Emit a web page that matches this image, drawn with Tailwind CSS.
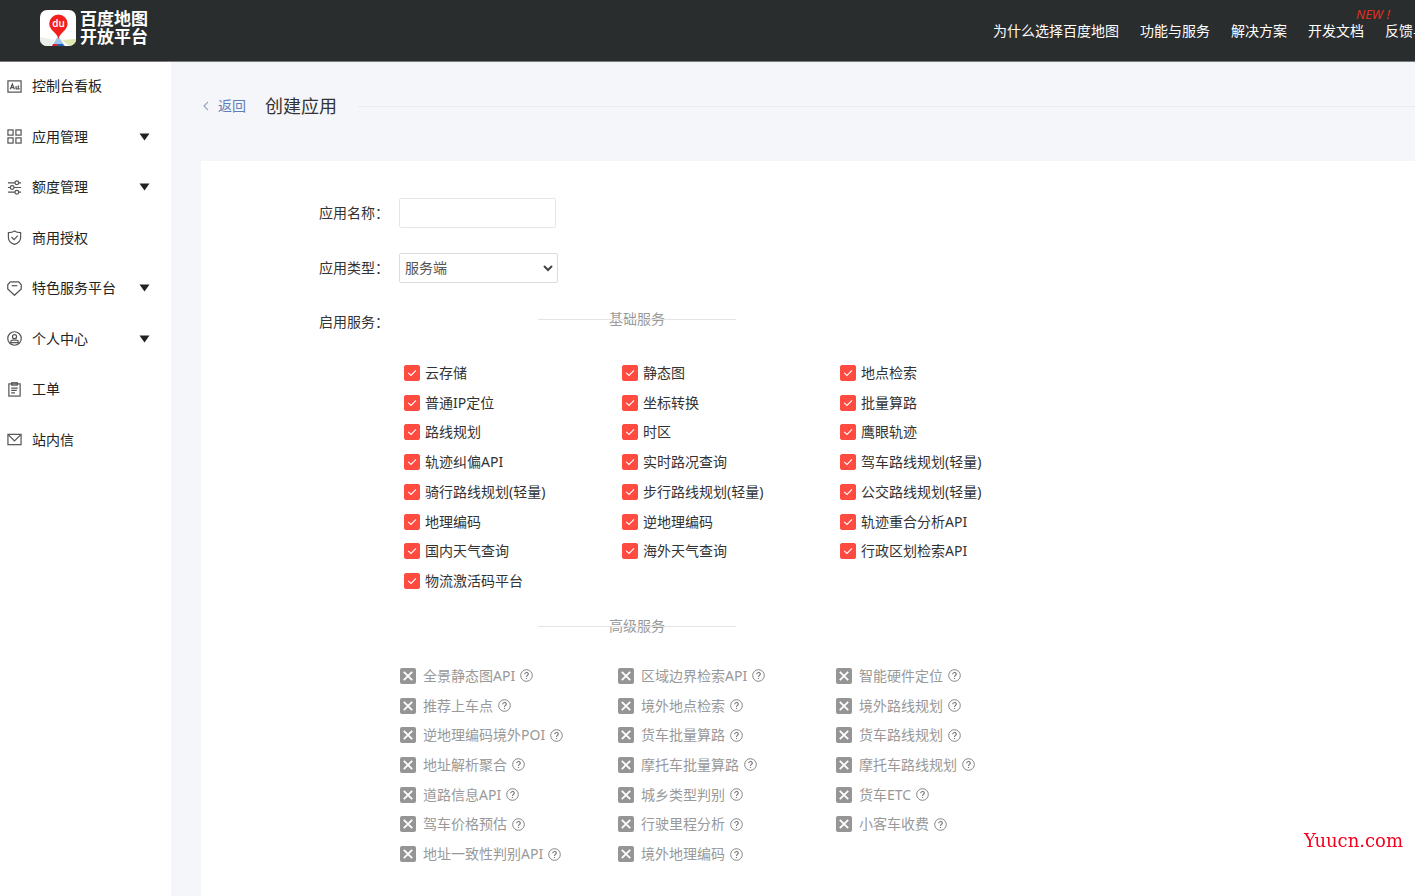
<!DOCTYPE html>
<html lang="zh-CN">
<head>
    <meta charset="UTF-8">
    <meta name="viewport" content="width=device-width, initial-scale=1.0">
    <title>百度地图开放平台</title>
    <script src="https://cdn.jsdelivr.net/npm/@tailwindcss/browser@4"></script>
</head>
<body class="flex flex-col h-screen overflow-hidden bg-[#f5f6fa] text-sm text-[#333] font-['Noto_Sans','Noto_Sans_CJK_SC',sans-serif]">

    <!-- Header -->
    <header class="flex shrink-0 items-center h-[62px] pl-10 bg-[#2a2d2e] border-b border-[#77797c] text-white">
        <a href="#" class="flex shrink-0 items-center gap-1 mb-1.5">
            <svg class="size-9" viewBox="0 0 36 36">
                <defs>
                    <clipPath id="logoClip"><rect width="36" height="36" rx="7" /></clipPath>
                </defs>
                <g clip-path="url(#logoClip)">
                    <rect width="36" height="36" fill="#fff" />
                    <path d="M0 27L14 30L11 36H0z" fill="#e9eee9" />
                    <path d="M22 30L36 29V33L29 36z" fill="#dfe8b0" />
                    <path d="M18 26L12 36H25z" fill="#9cc3ea" />
                    <path d="M13 34h5v2h-6z" fill="#d8262c" />
                    <path d="M18 34h5l1 2h-6z" fill="#2560b8" />
                    <path d="M18.500 29C17.500 23 9.200 20.500 9.200 13.800a9.200 9.200 0 0 1 18.400 0C27.600 20.500 19.500 23 18.500 29z" fill="#f0211f" />
                    <text x="18.500" y="17" text-anchor="middle" font-size="10" font-weight="600" font-family="Open Sans, sans-serif" fill="#fff">du</text>
                </g>
            </svg>
            <span class="text-[17px] leading-[18px] font-bold">百度地图<br>开放平台</span>
        </a>
        <nav class="flex gap-[21px] ml-auto whitespace-nowrap">
            <a href="#">为什么选择百度地图</a>
            <a href="#">功能与服务</a>
            <a href="#">解决方案</a>
            <a href="#" class="relative">开发文档
                <span class="absolute left-12 -top-[15px] text-[13px] leading-4 italic text-[#e0301e]">NEW !</span>
            </a>
            <a href="#" class="w-[30px] overflow-hidden">反馈与建议</a>
        </nav>
    </header>

    <div class="flex flex-1 min-h-0">
        <!-- Sidebar -->
        <aside class="w-[171px] shrink-0 bg-white">
            <ul id="menu" class="grid auto-rows-fr h-[404px] -mt-px"></ul>
        </aside>

        <main class="flex flex-col flex-1 min-w-0 pl-[30px]">
            <div class="flex items-center shrink-0 h-[99px] pb-[11px]">
                <a href="#" class="flex items-center gap-2 ml-px text-[#5f7fb9]">
                    <svg class="w-2 h-3" viewBox="0 0 8 12" fill="none" stroke="#9aa8c4" stroke-width="1.2"><path d="M6 2L2 6l4 4" /></svg>
                    返回
                </a>
                <h1 class="ml-[19px] text-lg">创建应用</h1>
                <div class="flex-1 ml-[21px] border-t border-[#e9ebf0]"></div>
            </div>

            <form class="flex-1 bg-white pl-[118px] pt-[37px]">
                <div class="flex items-center h-[30px] mb-[25px]">
                    <label for="appName" class="w-20">应用名称：</label>
                    <input id="appName" type="text" class="w-[157px] h-[30px] px-1.5 border border-[#e6e6e6] rounded-xs outline-none">
                </div>
                <div class="flex items-center h-[30px] mb-[25px]">
                    <label for="appType" class="w-20">应用类型：</label>
                    <div class="relative">
                        <select id="appType" class="block w-[159px] h-[30px] px-[5px] border border-[#dcdcdc] rounded-xs appearance-none bg-white text-[#555]">
                            <option>服务端</option>
                        </select>
                        <svg class="absolute right-1 top-2.5 w-3 h-2.5 pointer-events-none" viewBox="0 0 12 10" fill="none" stroke="#444" stroke-width="2"><path d="M2 3l4 4 4-4" /></svg>
                    </div>
                </div>
                <div class="flex">
                    <span class="w-20 shrink-0 pt-1">启用服务：</span>
                    <div class="pt-px">
                        <h2 class="relative w-[198px] ml-[139px] leading-5 text-center text-[#999]">
                            <span class="absolute inset-x-0 top-2.5 border-t border-[#e4e4e4]"></span>基础服务
                        </h2>
                        <div id="basic" class="grid grid-cols-[218px_218px_218px] auto-rows-fr h-[238px] pl-[5px] mt-[29px]"></div>
                        <h2 class="relative w-[198px] ml-[139px] mt-5 leading-5 text-center text-[#999]">
                            <span class="absolute inset-x-0 top-2.5 border-t border-[#e4e4e4]"></span>高级服务
                        </h2>
                        <div id="advanced" class="grid grid-cols-[218px_218px_218px] auto-rows-fr h-[208px] pl-px mt-[25px] text-[#999]"></div>
                    </div>
                </div>
            </form>
        </main>
    </div>

    <span class="fixed right-3 bottom-[43px] text-[18px] leading-6 text-[#f5001d] font-['DejaVu_Serif',serif]">Yuucn.com</span>

    <script>
        const menu = [
            ["控制台看板", false, '<rect x="1" y="2" width="14" height="12"/><path d="M3.500 11L5.700 5.500L7.900 11M4.200 9.300h3M9.700 7.500v3h1.500M13 7.500h-1v3h1.500"/>'],
            ["应用管理", true, '<rect x="1" y="1" width="5.500" height="5.500"/><rect x="9.500" y="1" width="5.500" height="5.500"/><rect x="1" y="9.500" width="5.500" height="5.500"/><rect x="9.500" y="9.500" width="5.500" height="5.500"/>'],
            ["额度管理", true, '<path d="M1 3h7.500M12.500 3H15M1 8h2.500M7.500 8H15M1 13h7.500M12.500 13H15"/><circle cx="10.500" cy="3" r="2"/><circle cx="5.500" cy="8" r="2"/><circle cx="10.500" cy="13" r="2"/>'],
            ["商用授权", false, '<path d="M8 1C6 2.500 4 2.800 1.500 2.800V8c0 3.500 2.500 6 6.500 7.400c4-1.400 6.500-3.900 6.500-7.400V2.800C12 2.800 10 2.500 8 1z"/><path d="M4.800 7.500l2.700 2.700 4-4.200"/>'],
            ["特色服务平台", true, '<path d="M3.500 1h9L15.200 4v4.500L8 15.200L0.800 8.500V4z" stroke-linejoin="round"/><path d="M5 5h6"/>'],
            ["个人中心", true, '<circle cx="8" cy="8" r="7.200"/><circle cx="8" cy="6" r="2.200"/><path d="M4 13.300v-1.500c0-1.200.8-2 2-2h4c1.200 0 2 .8 2 2v1.500M4 12.500h8"/>'],
            ["工单", false, '<rect x="2" y="2" width="12" height="13"/><rect x="5" y="0.800" width="6" height="2.500"/><path d="M4.500 6.500h7M4.500 9h6M4.500 11.500h4"/>'],
            ["站内信", false, '<rect x="1" y="2.500" width="14" height="11"/><path d="M1.500 3L8 9.500l6.500-6.500"/>'],
        ];

        const basic = [
            "云存储", "静态图", "地点检索",
            "普通IP定位", "坐标转换", "批量算路",
            "路线规划", "时区", "鹰眼轨迹",
            "轨迹纠偏API", "实时路况查询", "驾车路线规划(轻量)",
            "骑行路线规划(轻量)", "步行路线规划(轻量)", "公交路线规划(轻量)",
            "地理编码", "逆地理编码", "轨迹重合分析API",
            "国内天气查询", "海外天气查询", "行政区划检索API",
            "物流激活码平台",
        ];

        const advanced = [
            "全景静态图API", "区域边界检索API", "智能硬件定位",
            "推荐上车点", "境外地点检索", "境外路线规划",
            "逆地理编码境外POI", "货车批量算路", "货车路线规划",
            "地址解析聚合", "摩托车批量算路", "摩托车路线规划",
            "道路信息API", "城乡类型判别", "货车ETC",
            "驾车价格预估", "行驶里程分析", "小客车收费",
            "地址一致性判别API", "境外地理编码",
        ];

        document.getElementById("menu").innerHTML = menu.map(([name, open, icon]) => `
            <li class="flex">
                <a href="#" class="flex flex-1 items-center pl-[7px] pr-[21px] text-[#222]">
                    <svg class="size-[15px] mr-2.5" viewBox="0 0 16 16" fill="none" stroke="#555" stroke-width="1.3">${icon}</svg>
                    ${name}
                    ${open ? '<svg class="w-[11px] h-2 ml-auto" viewBox="0 0 11 8"><path d="M0.500 0.500h10L5.500 7.500z" fill="#222"/></svg>' : ''}
                </a>
            </li>`).join("");

        document.getElementById("basic").innerHTML = basic.map((name) => `
            <label class="flex items-center gap-[5px] whitespace-nowrap">
                <span class="relative size-4">
                    <input type="checkbox" checked class="block size-4 appearance-none rounded-xs border border-[#ff4b40] checked:bg-[#ff4b40]">
                    <svg class="absolute inset-0 size-4 pointer-events-none" viewBox="0 0 16 16" fill="none" stroke="#fff" stroke-width="1.1"><path d="M4.200 7.800l2.800 2.700 5-5.200"/></svg>
                </span>
                ${name}
            </label>`).join("");

        document.getElementById("advanced").innerHTML = advanced.map((name) => `
            <label class="flex items-center whitespace-nowrap">
                <span class="relative size-4 mr-[7px]">
                    <input type="checkbox" disabled class="block size-4 appearance-none rounded-xs bg-[#959595]">
                    <svg class="absolute inset-0 size-4 pointer-events-none" viewBox="0 0 16 16" fill="none" stroke="#fff" stroke-width="1.800"><path d="M3.800 3.800l8.400 8.400M12.200 3.800l-8.400 8.400"/></svg>
                </span>
                ${name}
                <svg class="size-[13px] ml-[5px]" viewBox="0 0 13 13" fill="none" stroke="#777"><circle cx="6.500" cy="6.500" r="5.800" stroke-width="0.900"/><path d="M4.700 5.300c0-2.400 3.600-2.400 3.600-.2c0 1.300-1.800 1.300-1.800 2.800M6.500 8.900v1.200" stroke-width="1.200"/></svg>
            </label>`).join("");
    </script>

</body>
</html>
